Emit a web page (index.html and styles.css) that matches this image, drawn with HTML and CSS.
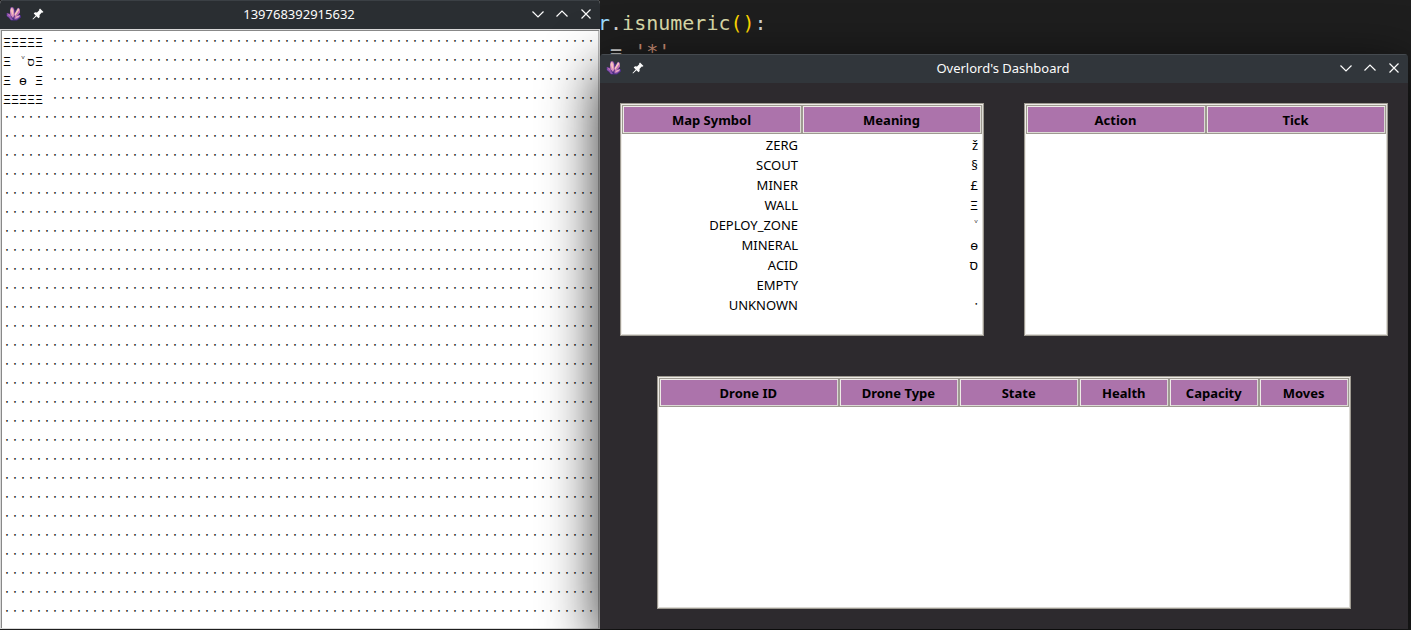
FILE: index.html
```
<!DOCTYPE html>
<html lang="en">
<head>
<meta charset="utf-8">
<title>Overlord's Dashboard</title>
<link rel="stylesheet" href="styles.css">
</head>
<body>
<svg class="defs" aria-hidden="true">
  <symbol id="crystal" viewBox="0 0 16 16">
    <path fill="#4b2e83" d="M4 1.500h4l1 3 3-3 2 1v4L13 9l2 .5v2l-4 3H5l-2-2.500-2.500-2V7l3.500.5z"/>
    <path fill="#8d55b0" d="M1 8l4 2.500 2 3.500H5L3 11.500 1 10zM10 12l4-3v2l-3 2.500H8z"/>
    <path fill="#d98fc0" d="M4 5l1-3.500h2L8 4l.5 5L7 12l-2.500-3z"/>
    <path fill="#f6c3bd" d="M4.500 4l1-2 1.500 2v5L6 8zM12 2l1.500 1-.5 3L9 11l-.5-3z"/>
    <path fill="#c06fb4" d="M14 3v3.500L9.500 12 8 13l1-3zM1 7l3 1.500 1 2-2-.5z"/>
    <path fill="#e9a6c4" d="M10 10.500l4-1.500-1 2-4 2z"/>
  </symbol>
  <symbol id="pin" viewBox="0 0 12 12">
    <path fill="#fcfcfc" d="M8 .5L11.500 4l-1.200.8L9.800 4.500 7.500 7l.2 2-1.200 1.200-2-2L1 11.500.5 11l3.200-3.500-2-2L3 4.300l2 .2L7.300 2.200 7 1.700z"/>
  </symbol>
  <symbol id="down" viewBox="0 0 12 12"><path class="stroke" d="M.5 3.500L6 9l5.500-5.500"/></symbol>
  <symbol id="up" viewBox="0 0 12 12"><path class="stroke" d="M.5 8.500L6 3l5.500 5.500"/></symbol>
  <symbol id="cross" viewBox="0 0 12 12"><path class="stroke" d="M1.500 1.500l9 9m0-9l-9 9"/></symbol>
</svg>

<pre class="editor"><span class="var">r</span>.<span class="fn">isnumeric</span><span class="paren">()</span>:
 = <span class="str">'*'</span></pre>

<section class="window map-window">
  <header class="titlebar">
    <div class="side">
      <svg class="app-icon"><use href="#crystal"/></svg>
      <button class="icon-btn" aria-label="Pin"><svg><use href="#pin"/></svg></button>
    </div>
    <h1 class="title">139768392915632</h1>
    <div class="side end">
      <button class="icon-btn" aria-label="Minimize"><svg><use href="#down"/></svg></button>
      <button class="icon-btn" aria-label="Maximize"><svg><use href="#up"/></svg></button>
      <button class="icon-btn" aria-label="Close"><svg><use href="#cross"/></svg></button>
    </div>
  </header>
  <div class="map" id="map"></div>
</section>

<section class="window dashboard">
  <header class="titlebar">
    <div class="side">
      <svg class="app-icon"><use href="#crystal"/></svg>
      <button class="icon-btn" aria-label="Pin"><svg><use href="#pin"/></svg></button>
    </div>
    <h1 class="title">Overlord's Dashboard</h1>
    <div class="side end">
      <button class="icon-btn" aria-label="Minimize"><svg><use href="#down"/></svg></button>
      <button class="icon-btn" aria-label="Maximize"><svg><use href="#up"/></svg></button>
      <button class="icon-btn" aria-label="Close"><svg><use href="#cross"/></svg></button>
    </div>
  </header>
  <div class="panels">
    <div class="panel-row">
      <div class="tree">
        <table>
          <thead><tr><th>Map Symbol</th><th>Meaning</th></tr></thead>
          <tbody>
            <tr><td>ZERG</td><td>ž</td></tr>
            <tr><td>SCOUT</td><td>§</td></tr>
            <tr><td>MINER</td><td>£</td></tr>
            <tr><td>WALL</td><td>Ξ</td></tr>
            <tr><td>DEPLOY_ZONE</td><td>˅</td></tr>
            <tr><td>MINERAL</td><td>ɵ</td></tr>
            <tr><td>ACID</td><td>ס</td></tr>
            <tr><td>EMPTY</td><td></td></tr>
            <tr><td>UNKNOWN</td><td>&#x387;</td></tr>
          </tbody>
        </table>
      </div>
      <div class="tree">
        <table>
          <thead><tr><th>Action</th><th>Tick</th></tr></thead>
        </table>
      </div>
    </div>
    <div class="tree drones">
      <table>
        <colgroup><col class="wide"><col class="mid"><col class="mid"><col class="slim"><col class="slim"><col class="slim"></colgroup>
        <thead><tr><th>Drone ID</th><th>Drone Type</th><th>State</th><th>Health</th><th>Capacity</th><th>Moves</th></tr></thead>
      </table>
    </div>
  </div>
</section>
<script src="map.js"></script>
</body>
</html>
```
FILE: map.js
```
// Explored tiles in the top-left corner; everything else is unknown.
const COLUMNS = 74;
const ROWS = 31;
const UNKNOWN = '\u0387';
const explored = ['ΞΞΞΞΞ ', 'Ξ ˅סΞ ', 'Ξ ɵ Ξ ', 'ΞΞΞΞΞ '];
const map = document.getElementById('map');
for (let y = 0; y < ROWS; y++) {
  const row = document.createElement('div');
  row.className = 'map-row';
  for (const symbol of (explored[y] || '').padEnd(COLUMNS, UNKNOWN)) {
    const tile = document.createElement('span');
    tile.className = 'tile';
    tile.textContent = symbol;
    row.append(tile);
  }
  map.append(row);
}
```
FILE: styles.css
```
* { box-sizing: border-box; }

body {
  margin: 0;
  height: 100vh;
  overflow: hidden;
  position: relative;
  background: #1e1e1e;
  font: 13px/20px "Noto Sans", sans-serif;
  color: #000;
}

.defs { position: absolute; width: 0; height: 0; }
.stroke { fill: none; stroke: #fcfcfc; stroke-width: 1.2; }

.editor {
  margin: 0;
  padding: 9px 0 0 598px;
  font: 20px/28px "DejaVu Sans Mono", monospace;
  color: #d4d4d4;
}
.var { color: #9cdcfe; }
.fn { color: #dcdcaa; }
.paren { color: #ffd700; }
.str { color: #ce9178; }

.window {
  position: absolute;
  display: flex;
  flex-direction: column;
  border-radius: 4px 4px 0 0;
  overflow: hidden;
}
.map-window {
  top: 0;
  left: 0;
  bottom: 1px;
  width: 600px;
  background: #fff;
}
.dashboard {
  top: 54px;
  left: 600px;
  right: 3px;
  bottom: 1px;
  background: #2d2a2e;
  box-shadow: 0 16px 56px rgba(0, 0, 0, 0.85);
}

.titlebar {
  display: flex;
  align-items: center;
  justify-content: space-between;
  height: 29px;
  flex: none;
  padding: 0 8px 2px 6px;
  border-top: 1px solid #3b4045;
  background: #2a2e32;
  color: #fcfcfc;
}
.dashboard .titlebar { background: #31363b; border-top-color: #454a4f; }
.side { display: flex; align-items: center; gap: 10px; flex: 1; }
.side.end { justify-content: flex-end; gap: 12px; }
.title { margin: 0; font-size: 13px; font-weight: 400; line-height: 20px; }
.app-icon { width: 16px; height: 16px; }
.icon-btn {
  width: 12px;
  height: 12px;
  padding: 0;
  border: 0;
  background: none;
}
.icon-btn svg { display: block; width: 12px; height: 12px; }

.map {
  flex: 1;
  padding: 3px 2px;
  overflow: hidden;
  border: 1px solid #d9d9d9;
  box-shadow: inset 1px 1px #888, inset -1px 0 #bbb;
  font: 13px/19px "Noto Sans", "DejaVu Sans Mono", monospace;
}
.map-row { display: flex; height: 19px; }
.tile { flex: none; width: 8px; text-align: center; white-space: pre; }

.panels {
  display: grid;
  grid-template-rows: 1fr 1fr;
  justify-items: center;
  gap: 40px;
  flex: 1;
  padding: 20px;
}
.panel-row {
  display: flex;
  justify-content: space-between;
  gap: 40px;
  width: 100%;
}
.panel-row .tree { flex: 1; }
.drones { width: 90.4%; }
.tree {
  background: #fff;
  border: 1px solid #9e9a91;
  box-shadow: inset 1px 1px #eeebe7, inset -1px -1px #dcdad5;
  padding: 1px;
}
table { width: 100%; border-collapse: separate; border-spacing: 0; table-layout: fixed; }
th {
  height: 29px;
  padding: 0 1px 0 0;
  background: #ac73ab;
  border: 1px solid #9e9a91;
  box-shadow: inset 1px 1px #eeebe7, inset -1px -1px #dcdad5;
  font-weight: 700;
  line-height: 20px;
}
td { height: 20px; padding: 2px 4px 0; text-align: right; line-height: 18px; }
.wide { width: 26%; }
.mid { width: 17.4%; }
.slim { width: 13%; }
```
